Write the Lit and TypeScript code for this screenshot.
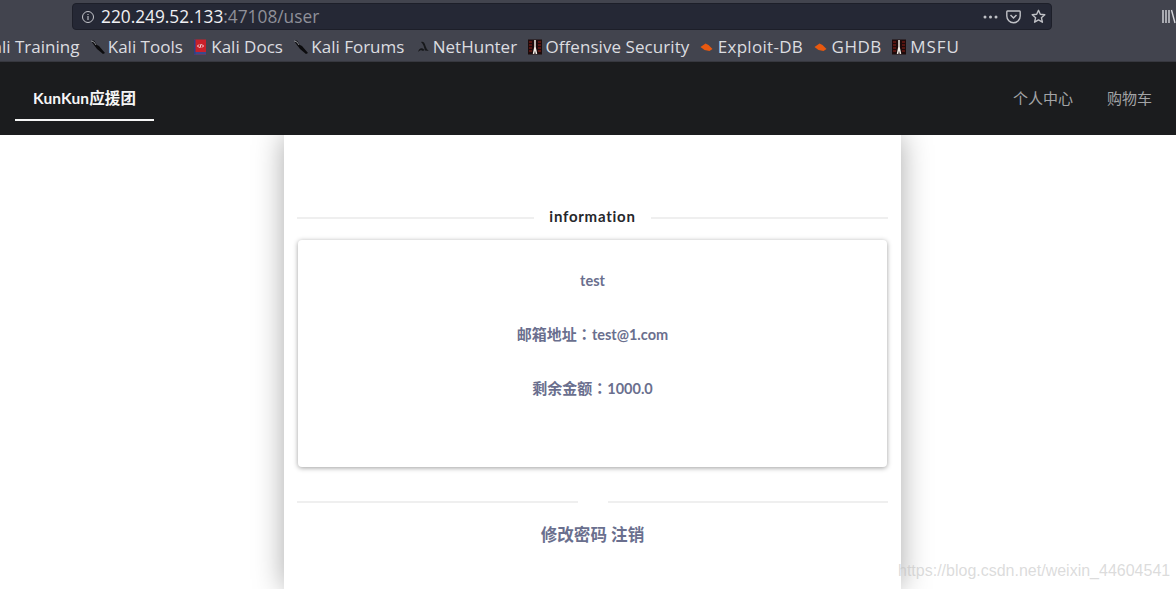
import { LitElement, html, css, svg } from "lit";
import { customElement } from "lit/decorators.js";

const knife = svg`<svg class="fav" width="16" height="16" viewBox="0 0 16 16"><path d="M1 2 L4 1.500 L7 6 L9 7 L15 14 L13 15 L7 10 L5.500 8 Z" fill="#0c0c0e"/><path d="M1 2 L4 3 L6 6" stroke="#b9bcc2" stroke-width=".7" fill="none"/></svg>`;
const book = svg`<svg class="fav" width="16" height="16" viewBox="0 0 16 16"><rect x="1" y="0.500" width="12" height="15" fill="#c9202a"/><rect x="1" y="13" width="12" height="2.500" fill="#3a4a8c"/><rect x="1" y="0.500" width="1.500" height="15" fill="#2f3f85"/><path d="M4.500 7 L6 5.500 M4.500 7 L6 8.500 M10.500 7 L9 5.500 M10.500 7 L9 8.500 M8.200 5 L6.800 9" stroke="#fff" stroke-width=".9" fill="none"/></svg>`;
const hunter = svg`<svg class="fav" width="16" height="16" viewBox="0 0 16 16"><path d="M6 3 C9 1.500 10 5 11 8 C11.500 10 13 11.500 14 12 L10 11.500 C9 8 8.500 5 6 3 Z M3 13 C4 9 7 8 9.500 11 L8 12 C6.500 10.800 5 11 3 13 Z" fill="#17181b"/></svg>`;
const offsec = svg`<svg class="fav" width="16" height="16" viewBox="0 0 16 16"><rect x="0" width="14" height="15" y=".5" fill="#1d0b0b"/><path d="M1 3 H4 M1 6 H4 M1 9 H4 M1 12 H4 M10 3 H13 M10 6 H13 M10 9 H13 M10 12 H13" stroke="#6b1a14" stroke-width="1.400"/><path d="M7 1 V8 M5.500 15 L7 8 L8.500 15" stroke="#f2efe8" stroke-width="1.500" fill="none"/></svg>`;
const bug = svg`<svg class="fav" width="16" height="16" viewBox="0 0 16 16"><path d="M0.500 8 L5.500 4.500 L8.500 6 L12.500 10 L9.500 12 L4.500 11 Z" fill="#e8590f"/></svg>`;

interface Mark { icon: unknown; label: string; spacing: number; }
const marks: Mark[] = [
  { icon: knife, label: "Kali Tools", spacing: 0 },
  { icon: book, label: "Kali Docs", spacing: 0 },
  { icon: knife, label: "Kali Forums", spacing: 0 },
  { icon: hunter, label: "NetHunter", spacing: 0 },
  { icon: offsec, label: "Offensive Security", spacing: 0.06 },
  { icon: bug, label: "Exploit-DB", spacing: 0.3 },
  { icon: bug, label: "GHDB", spacing: 0.5 },
  { icon: offsec, label: "MSFU", spacing: 1 },
];

@customElement("app-root")
export class AppRoot extends LitElement {
  static styles = css`
    :host { display: block; width: 1176px; height: 589px; overflow: hidden; position: relative; background: #fff;
      font-family: Lato, "Noto Sans CJK SC", sans-serif; }
    .chrome { background: #42444e; height: 61px; display: flex; flex-direction: column; border-bottom: 1px solid #37383f; overflow: hidden;
      font-family: "Open Sans", "Noto Sans", sans-serif; }
    .tools { height: 30px; display: flex; align-items: flex-start; padding-top: 3px; box-sizing: border-box; padding-left: 72px; }
    .url { width: 980px; height: 27px; box-sizing: border-box; background: #252835; border: 1px solid #1d1f29; border-radius: 4px;
      display: flex; align-items: center; padding: 0 5px 0 8px; color: #f0f0f3; font-size: 17.300px; }
    .url .host { margin-left: 6px; }
    .url .rest { color: #8f9099; flex: 1; }
    .url svg { display: block; }
    .dots { margin-right: 8px; }
    .pocket { margin-right: 10px; }
    .lib { position: absolute; left: 1162px; top: 9px; display: block; }
    .marks { height: 31px; padding-top: 2px; box-sizing: border-box; display: flex; align-items: center; color: #dcdde0; font-size: 17px; white-space: nowrap; margin-left: -7.500px; }
    .mark { display: flex; align-items: center; gap: 2px; margin-right: 10.400px; }
    .fav { display: block; flex: none; }
    .nav { height: 73px; background: #1b1c1e; display: flex; justify-content: space-between; align-items: stretch; }
    .brand { margin-left: 15px; width: 139px; height: 59px; box-sizing: border-box; border-bottom: 2px solid #f5f5f5; color: #f5f5f5; font-size: 15.500px; font-weight: 700; letter-spacing: .15px;
      padding: 27px 0 0 18px; line-height: 18px; }
    .links { display: flex; gap: 34px; padding: 26px 24px 0 0; color: #a3a4a6; font-size: 15px; line-height: 20px; }
    .page { display: flex; justify-content: center; }
    .sheet { width: 617px; height: 454px; box-sizing: border-box; margin-left: 9px; padding: 72px 13px 0; background: #fff; box-shadow: 0 0 28px rgba(0,0,0,.34); display: flex; flex-direction: column; clip-path: inset(0 -60px 0 -60px); }
    .rule { display: flex; align-items: center; }
    .rule i { flex: 1; height: 2px; background: #efefef; }
    .rule b { padding: 0 15px 2px; color: #26272b; font-size: 15px; line-height: 19px; letter-spacing: .75px; font-weight: 700; }
    .rule b.empty { width: 30px; padding: 0; height: 21px; }
    .card { margin: 12px 1px 0; height: 227px; border-radius: 4px; background: #fff; box-shadow: 0 1px 5px rgba(0,0,0,.38); display: flex; flex-direction: column; align-items: center; color: #6a6f8e; font-size: 14.500px; font-weight: 700; padding-top: 30px; box-sizing: border-box; }
    .card p { margin: 0 0 33px; line-height: 21px; }
    .zh { font-size: 15px; font-family: Lato, "Noto Sans CJK TC", sans-serif; }
    .second { margin-top: 24px; }
    .actions { text-align: center; color: #6a6f8e; font-size: 16.600px; font-weight: 700; line-height: 22px; margin-top: 12px; }
    .wm { position: absolute; left: 898px; top: 562px; color: rgba(190,190,190,.55); font-size: 16px; font-family: "Liberation Sans", sans-serif; white-space: nowrap; }
  `;

  render() {
    return html`
      <div class="chrome">
        <div class="tools">
          <div class="url">
            <svg width="14" height="14" viewBox="0 0 14 14"><circle cx="7" cy="7" r="5.500" fill="none" stroke="#c4c5cb" stroke-width="1"/><path d="M7 6 V10 M7 4 V5" stroke="#c4c5cb" stroke-width="1.100"/></svg>
            <span class="host">220.249.52.133</span><span class="rest">:47108/user</span>
            <svg class="dots" width="15" height="4" viewBox="0 0 15 4"><circle cx="2" cy="2" r="1.500" fill="#c0c1c6"/><circle cx="7.500" cy="2" r="1.500" fill="#c0c1c6"/><circle cx="13" cy="2" r="1.500" fill="#c0c1c6"/></svg>
            <svg class="pocket" width="15" height="14" viewBox="0 0 15 14"><path d="M1.500 1 H13.500 A.8 .8 0 0 1 14.200 1.800 V6 A6.700 6.700 0 0 1 .8 6 V1.800 A.8 .8 0 0 1 1.500 1 Z" fill="none" stroke="#c0c1c6" stroke-width="1.400"/><path d="M4.500 5 L7.500 8 L10.500 5" fill="none" stroke="#c0c1c6" stroke-width="1.500"/></svg>
            <svg width="15" height="15" viewBox="0 0 15 15"><path d="M7.500 1.300 L9.300 5.300 L13.800 5.800 L10.400 8.700 L11.400 13.200 L7.500 10.900 L3.600 13.200 L4.600 8.700 L1.200 5.800 L5.700 5.300 Z" fill="none" stroke="#c0c1c6" stroke-width="1.400" stroke-linejoin="round"/></svg>
          </div>
          <svg class="lib" width="14" height="15" viewBox="0 0 14 15"><path d="M1 1 V14 M4 1 V14 M7 1 V14 M9.500 1 L13 14" stroke="#d5d6da" stroke-width="1.400"/></svg>
        </div>
        <div class="marks">
          <span class="mark">ali Training</span>
          ${marks.map((m) => html`<span class="mark" style="letter-spacing:${m.spacing}px">${m.icon}${m.label}</span>`)}
        </div>
      </div>
      <div class="nav">
        <div class="brand">KunKun应援团</div>
        <div class="links"><span>个人中心</span><span>购物车</span></div>
      </div>
      <div class="page">
        <div class="sheet">
          <div class="rule"><i></i><b>information</b><i></i></div>
          <div class="card">
            <p>test</p>
            <p><span class="zh">邮箱地址：</span>test@1.com</p>
            <p><span class="zh">剩余金额：</span>1000.0</p>
          </div>
          <div class="rule second"><i></i><b class="empty"></b><i></i></div>
          <div class="actions">修改密码 注销</div>
        </div>
      </div>
      <div class="wm">https://blog.csdn.net/weixin_44604541</div>
    `;
  }
}
